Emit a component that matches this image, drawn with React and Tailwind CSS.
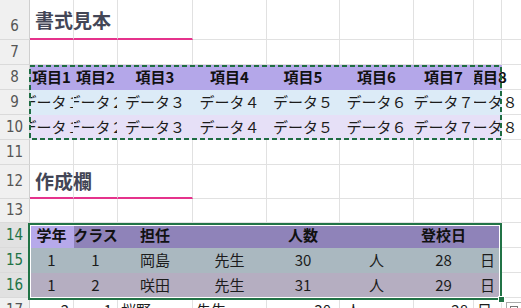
import React from "react";

const JP = { fontFamily: '"Noto Sans CJK JP", "Noto Sans", sans-serif' };

// column widths incl. 1px right gridline
const W = [
  "w-[30px]",
  "w-[44px]",
  "w-[44px]",
  "w-[75px]",
  "w-[74px]",
  "w-[73px]",
  "w-[74px]",
  "w-[60px]",
  "w-[28px]",
  "w-[40px]",
];

function RowHead({ n, sel, className = "" }) {
  return (
    <div
      className={`${W[0]} shrink-0 h-full flex items-center justify-center border-r border-b border-r-[#cfcfcf] border-b-[#dadada] text-[15px] ${
        sel ? "bg-[#e1e1e1] text-[#217346]" : "bg-[#f0f0f0] text-[#555]"
      } ${className}`}
      style={{ fontFamily: '"DejaVu Sans Condensed", "Liberation Sans", sans-serif' }}
    >
      {n}
    </div>
  );
}

function Cell({ i, fill, children, className = "" }) {
  return (
    <div
      className={`${W[i]} shrink-0 h-full flex items-center whitespace-nowrap border-r border-b ${
        fill ? fill + " border-transparent" : "border-[#e1e1e1]"
      } ${className}`}
    >
      {children}
    </div>
  );
}

function EmptyRow({ n, h }) {
  return (
    <div className={`flex ${h}`}>
      <RowHead n={n} />
      {[1, 2, 3, 4, 5, 6, 7, 8, 9].map((i) => (
        <Cell key={i} i={i} />
      ))}
    </div>
  );
}

function TitleRow({ n, h, title, headClass, textClass }) {
  return (
    <div className={`flex ${h}`}>
      <RowHead n={n} className={headClass} />
      <Cell i={1} className={`border-b-2 border-b-[#e5338c] overflow-visible ${textClass}`}>
        <span className="pl-[5px] text-[19px] font-bold text-[#434656]">{title}</span>
      </Cell>
      <Cell i={2} className="border-b-2 border-b-[#e5338c]" />
      <Cell i={3} className="border-b-2 border-b-[#e5338c]" />
      {[4, 5, 6, 7, 8, 9].map((i) => (
        <Cell key={i} i={i} />
      ))}
    </div>
  );
}

function FillRow({ n, fills, items, bold, sel, spillLast }) {
  return (
    <div className="flex h-[25px]">
      <RowHead n={n} sel={sel} />
      {items.map((t, k) => {
        const i = k + 1;
        const last = spillLast && i === 8;
        return (
          <Cell
            key={i}
            i={i}
            fill={fills[k]}
            className={`justify-center ${
              last ? "overflow-visible [clip-path:inset(0_-40px_0_0)]" : "overflow-hidden"
            } text-[15px] ${bold ? "font-bold text-[#111]" : "text-[#1c1c1c]"}`}
          >
            <span className="shrink-0">{t}</span>
          </Cell>
        );
      })}
      <Cell i={9} />
    </div>
  );
}

export default function App() {
  const purple = Array(8).fill("bg-[#b4a7e9]");
  const blue = Array(8).fill("bg-[#dcebf7]");
  const lav = Array(8).fill("bg-[#e6e0f7]");
  const head2 = ["bg-[#b6a9ea]", ...Array(7).fill("bg-[#8f83b9]")];
  const gray1 = Array(8).fill("bg-[#aab8c0]");
  const gray2 = Array(8).fill("bg-[#b5aec1]");

  const data = ["データ１", "データ２", "データ３", "データ４", "データ５", "データ６", "データ７", "データ８"];

  return (
    <div className="relative w-[521px] h-[308px] overflow-hidden bg-white" style={JP}>
      <TitleRow n="6" h="h-[40px]" title="書式見本" headClass="pt-[14px]" textClass="pt-[3px]" />
      <EmptyRow n="7" h="h-[25px]" />

      <div className="relative">
        <FillRow
          n="8"
          fills={purple}
          bold
          spillLast
          items={["項目1", "項目2", "項目3", "項目4", "項目5", "項目6", "項目7", "項目8"]}
        />
        <FillRow n="9" fills={blue} spillLast items={data} />
        <FillRow n="10" fills={lav} spillLast items={data} />
        {/* copy marquee */}
        <svg className="absolute left-[29px] top-0 pointer-events-none" width="474" height="75">
          <rect
            x="1"
            y="1"
            width="471"
            height="73"
            fill="none"
            stroke="#1e6c42"
            strokeWidth="2"
            strokeDasharray="5 3"
          />
        </svg>
      </div>

      <EmptyRow n="11" h="h-[25px]" />
      <TitleRow n="12" h="h-[34px]" title="作成欄" />
      <EmptyRow n="13" h="h-[24px]" />

      <FillRow n="14" sel fills={head2} bold items={["学年", "クラス", "担任", "", "人数", "", "登校日", ""]} />
      <FillRow n="15" sel fills={gray1} items={["1", "1", "岡島", "先生", "30", "人", "28", "日"]} />
      <FillRow n="16" sel fills={gray2} items={["1", "2", "咲田", "先生", "31", "人", "29", "日"]} />

      {/* row 17, outside the formatted range */}
      <div className="flex h-[25px] text-[15px] text-[#1c1c1c]">
        <RowHead n="17" />
        <Cell i={1} className="justify-end pr-[4px]">2</Cell>
        <Cell i={2} className="justify-end pr-[5px]">1</Cell>
        <Cell i={3} className="pl-[3px]">桜野</Cell>
        <Cell i={4} className="pl-[3px]">先生</Cell>
        <Cell i={5} className="justify-end pr-[8px]">30</Cell>
        <Cell i={6} className="pl-[6px]">人</Cell>
        <Cell i={7} className="justify-end pr-[5px]">28</Cell>
        <Cell i={8} className="pl-[3px]">日</Cell>
        <Cell i={9} />
      </div>

      {/* selection border */}
      <div className="absolute left-[28px] top-[223px] w-[474px] h-[77px] border-2 border-[#217346] shadow-[inset_0_0_0_1px_#ffffff] pointer-events-none" />
      <div className="absolute left-[498px] top-[296px] w-[7px] h-[7px] bg-[#217346] border border-white" />
      {/* autofill options button */}
      <div className="absolute left-[506px] top-[302px] w-[20px] h-[20px] bg-white border border-[#ababab]">
        <div className="ml-[3px] mt-[3px] w-[8px] h-[6px] border border-[#777]" />
      </div>
    </div>
  );
}
